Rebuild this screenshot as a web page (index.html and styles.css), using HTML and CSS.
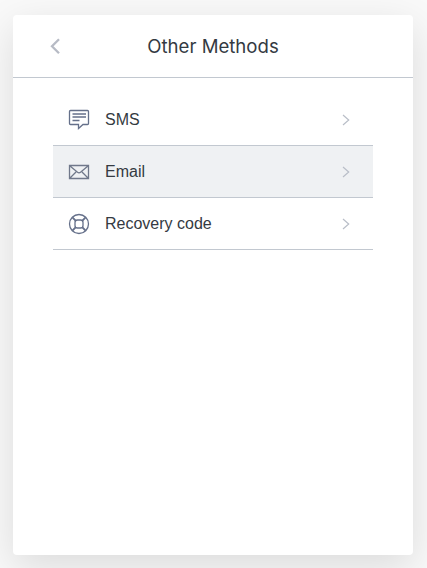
FILE: index.html
```html
<!DOCTYPE html>
<html lang="en">
<head>
<meta charset="utf-8">
<title>Other Methods</title>
<link rel="stylesheet" href="styles.css">
</head>
<body>
<main class="card">
  <header class="header">
    <button class="back" aria-label="Back"><svg width="12" height="18" viewBox="0 0 12 18"><path d="M10 2.300 3 9.300 10 16.300"/></svg></button>
    <h1 class="title">Other Methods</h1>
  </header>
  <ul class="methods">
    <li class="method">
      <svg class="icon" width="22" height="22" viewBox="0 0 22 22"><path d="M2.500 1.500h17q1 0 1 1v12q0 1-1 1h-4.500L10.500 19.500v-4H2.500q-1 0-1-1v-12q0-1 1-1ZM4.500 5h13.500M4.500 8h13.500M4.500 11.500h7"/></svg>
      <span class="label">SMS</span>
      <svg class="arrow" width="10" height="14" viewBox="0 0 10 14"><path d="m2 2 5.700 5-5.700 5"/></svg>
    </li>
    <li class="method active">
      <svg class="icon" width="22" height="22" viewBox="0 0 22 22"><path d="M1.500 4.500h19v13h-19ZM2 5l7.500 6.300q1.500 1 3 0L20 5M2 17l6-6M20 17l-6-6"/></svg>
      <span class="label">Email</span>
      <svg class="arrow" width="10" height="14" viewBox="0 0 10 14"><path d="m2 2 5.700 5-5.700 5"/></svg>
    </li>
    <li class="method">
      <svg class="icon" width="22" height="22" viewBox="0 0 22 22"><circle cx="11" cy="11" r="9.500"/><rect x="7" y="7" width="8" height="8" rx="2.500"/><path d="m4.400 4.400 3.200 3.200M17.600 4.400l-3.200 3.200M4.400 17.600l3.200-3.200M17.600 17.600l-3.200-3.200" stroke-width="1.900"/></svg>
      <span class="label">Recovery code</span>
      <svg class="arrow" width="10" height="14" viewBox="0 0 10 14"><path d="m2 2 5.700 5-5.700 5"/></svg>
    </li>
  </ul>
</main>
</body>
</html>
```
FILE: styles.css
```css
* { box-sizing: border-box; }
body {
  margin: 0;
  height: 568px;
  padding: 15px 14px 13px 13px;
  background: #f9f9f9;
  color: #343a42;
  font-family: "Liberation Sans", Arial, sans-serif;
  overflow: hidden;
}
.card {
  height: 540px;
  background: #fff;
  border-radius: 4px;
  box-shadow: 0 12px 40px rgba(0, 0, 0, 0.12);
}
.header {
  display: grid;
  grid-template-columns: 40px 1fr 40px;
  align-items: center;
  height: 63px;
  padding: 0 22px;
  border-bottom: 1px solid #c2c8d0;
}
.back {
  display: flex;
  justify-content: center;
  padding: 0;
  border: 0;
  background: none;
}
.back path { fill: none; stroke: #b7bbc5; stroke-width: 2.3; }
.title {
  margin: 0;
  padding-bottom: 1px;
  text-align: center;
  font: 400 18.6px/24px Inter, sans-serif;
}
.methods {
  list-style: none;
  margin: 16px 40px 0;
  padding: 0;
}
.method {
  display: flex;
  align-items: center;
  height: 52px;
  padding: 0 22px 0 15px;
  border-bottom: 1px solid #c2c8d0;
}
.active { background: #eff1f3; }
.label {
  flex: 1;
  margin-left: 15px;
  font-size: 16px;
  line-height: 24px;
}
.icon { fill: none; stroke: #65708a; stroke-width: 1.3; }
.active .icon { stroke: #70788a; }
.arrow { fill: none; stroke: #b9bec8; stroke-width: 1.2; }
```
